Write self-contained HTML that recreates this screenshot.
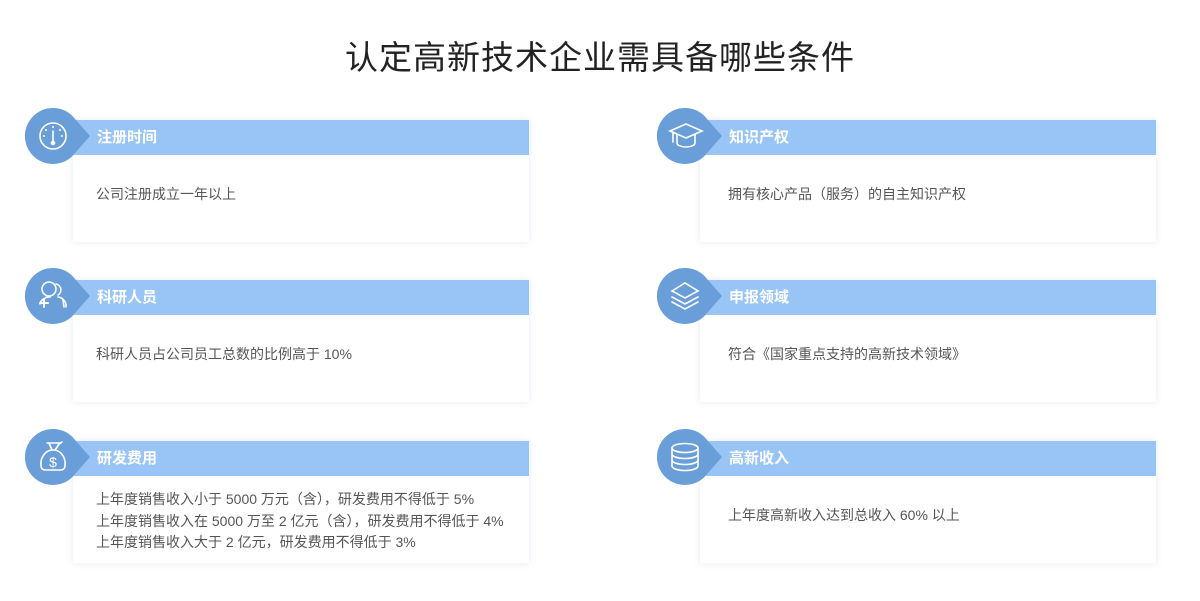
<!DOCTYPE html>
<html><head><meta charset="utf-8"><style>
*{margin:0;padding:0;box-sizing:border-box}
body{width:1200px;height:601px;background:#fff;font-family:"Liberation Sans","Noto Sans CJK SC",sans-serif;position:relative;overflow:hidden}
h1{position:absolute;top:31px;left:0;width:1200px;text-align:center;font-size:33px;font-weight:normal;color:#222;letter-spacing:1px}
.card{position:absolute;width:456px;background:#fff;box-shadow:0 0 6px rgba(150,170,220,0.25)}
.hd{height:35px;background:#98c5f6;color:#fff;font-size:15px;font-weight:bold;line-height:35px;padding-left:24px}
.r .hd{padding-left:29px}
.bd{color:#555;font-size:14px;line-height:21.5px;padding-left:23px}
</style></head><body>
<h1>认定高新技术企业需具备哪些条件</h1>

<div class="card" style="left:73px;top:120px;height:122px"><div class="hd">注册时间</div><div class="bd" style="padding-top:29px">公司注册成立一年以上</div></div>
<div class="card" style="left:73px;top:280px;height:122px"><div class="hd">科研人员</div><div class="bd" style="padding-top:29px">科研人员占公司员工总数的比例高于 10%</div></div>
<div class="card" style="left:73px;top:441px;height:122px"><div class="hd">研发费用</div><div class="bd" style="padding-top:13px">上年度销售收入小于 5000 万元（含），研发费用不得低于 5%<br>上年度销售收入在 5000 万至 2 亿元（含），研发费用不得低于 4%<br>上年度销售收入大于 2 亿元，研发费用不得低于 3%</div></div>

<div class="card r" style="left:700px;top:120px;height:122px"><div class="hd">知识产权</div><div class="bd" style="padding-top:29px;padding-left:28px">拥有核心产品（服务）的自主知识产权</div></div>
<div class="card r" style="left:700px;top:280px;height:122px"><div class="hd">申报领域</div><div class="bd" style="padding-top:29px;padding-left:28px">符合《国家重点支持的高新技术领域》</div></div>
<div class="card r" style="left:700px;top:441px;height:122px"><div class="hd">高新收入</div><div class="bd" style="padding-top:29px;padding-left:28px">上年度高新收入达到总收入 60% 以上</div></div>

<svg width="1200" height="601" style="position:absolute;left:0;top:0" fill="none" stroke="#fff" stroke-width="1.6" stroke-linecap="round">
<defs><path id="b" d="M0,-28 A28,28 0 1 0 19,20.5 L37,0 L19,-20.5 A28,28 0 0 0 0,-28Z"/></defs>
<g fill="#6a9ed8" stroke="none">
<use href="#b" x="53" y="136"/><use href="#b" x="53" y="296"/><use href="#b" x="53" y="457"/>
<use href="#b" x="685" y="136"/><use href="#b" x="685" y="296"/><use href="#b" x="685" y="457"/>
</g>
<circle cx="53" cy="136" r="13"/>
<path d="M53,131 L53,143"/><circle cx="53" cy="143" r="1.5" fill="#fff"/>
<g fill="#fff" stroke="none"><circle cx="53" cy="127" r="1"/><circle cx="46" cy="130" r="1"/><circle cx="60" cy="130" r="1"/><circle cx="44" cy="136" r="1"/><circle cx="62" cy="136" r="1"/></g>
<circle cx="49" cy="289" r="7"/><path d="M56,284 A6,6 0 0 1 58,295 M40,304 A10,8 0 0 1 50,297 M58,297 A9,9 0 0 1 66,307 M63,300 L64,307"/>
<path d="M44,299 V307 M40,303 H48" stroke-width="2"/>
<path d="M47,443 L60,443 L55,450 M49,443 L52,450 M52,450 A12,14 0 0 0 41,466 A4,4 0 0 0 45,470 L61,470 A4,4 0 0 0 65,466 A12,14 0 0 0 55,450 Z M58,445 L62,442"/>
<text x="53" y="467" fill="#fff" stroke="none" font-size="14" text-anchor="middle" font-family="Liberation Sans">$</text>
<path d="M670,131 L686,124 L702,131 L686,138 Z M677,134 V143 A9,4 0 0 0 695,143 V134 M673,132 V142"/>
<path d="M672,291 L685,283 L698,291 L685,298 Z M672,297 L685,304 L698,297 M672,302 L685,309 L698,302"/>
<ellipse cx="685" cy="448" rx="13" ry="4.5"/><path d="M672,448 V466 A13,4.5 0 0 0 698,466 V448 M672,454 A13,4.5 0 0 0 698,454 M672,460 A13,4.5 0 0 0 698,460"/>
</svg>
</body></html>
